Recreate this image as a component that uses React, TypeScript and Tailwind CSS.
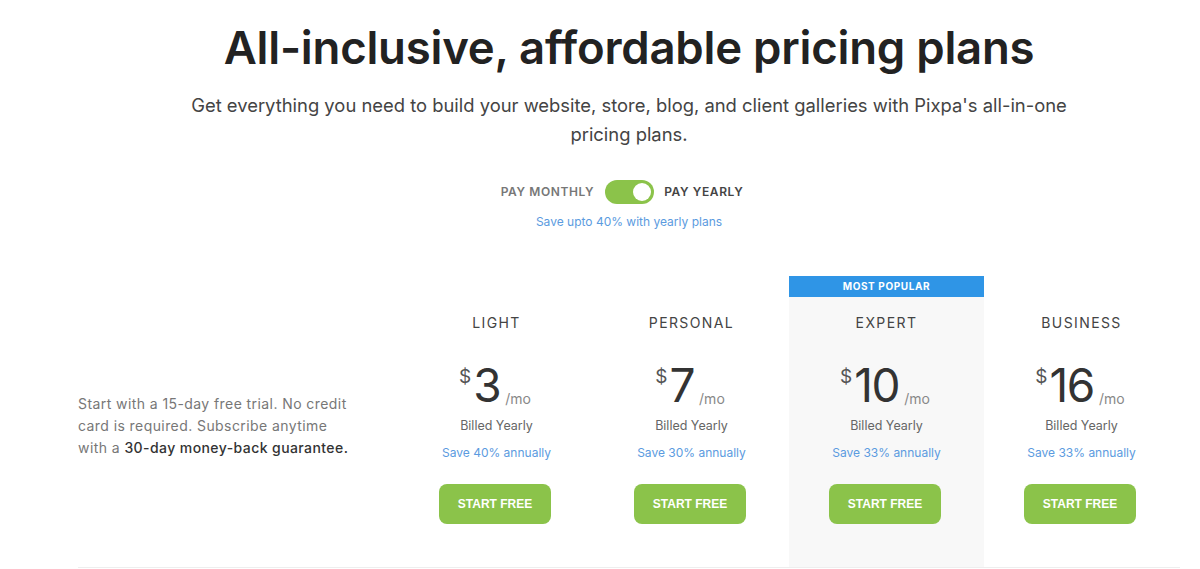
import React from 'react';

const plans = [
  { name: 'LIGHT', price: '3', save: 'Save 40% annually', popular: false },
  { name: 'PERSONAL', price: '7', save: 'Save 30% annually', popular: false },
  { name: 'EXPERT', price: '10', save: 'Save 33% annually', popular: true },
  { name: 'BUSINESS', price: '16', save: 'Save 33% annually', popular: false },
];

function PlanColumn({ plan }: { plan: (typeof plans)[number] }) {
  return (
    <div className="w-[195px] flex flex-col">
      <div
        className={`h-[21px] flex items-center justify-center text-[10px] font-bold tracking-[0.06em] text-white ${
          plan.popular ? 'bg-[#2f95e6]' : ''
        }`}
      >
        {plan.popular ? 'MOST POPULAR' : ''}
      </div>
      <div className={`flex-1 flex flex-col items-center pt-[16px] pb-[43px] ${plan.popular ? 'bg-[#f8f8f8]' : ''}`}>
        <div className="text-[14px] tracking-[0.1em] text-[#444] leading-[20px]">{plan.name}</div>
        <div className="mt-[29px] flex items-end h-[46px] -ml-[3px]">
          <span className="self-start text-[19px] text-[#555] leading-none mt-[5px] mr-[2px]">$</span>
          <span className="text-[46px] text-[#333] leading-none tracking-[-0.03em]">{plan.price}</span>
          <span className="text-[14px] text-[#888] leading-none ml-[5px] mb-[2px]">/mo</span>
        </div>
        <div className="mt-[8px] text-[12.5px] text-[#666] leading-[20px]">Billed Yearly</div>
        <div className="mt-[7px] text-[12px] text-[#5b9be0] leading-[20px]">{plan.save}</div>
        <button className="mt-[21px] -ml-[3px] w-[112px] h-[40px] rounded-[8px] bg-[#8bc34a] text-white text-[12px] font-bold font-['Liberation_Sans',sans-serif]">
          START FREE
        </button>
      </div>
    </div>
  );
}

export default function App() {
  return (
    <div className="w-[1200px] h-[569px] bg-white overflow-hidden font-['Inter',sans-serif]">
      <div className="ml-[78px] w-[1102px] flex flex-col items-center">
        <h1 className="mt-[20px] text-[45.5px] font-semibold text-[#222] leading-[56px] tracking-[-0.005em]">
          All-inclusive, affordable pricing plans
        </h1>
        <p className="mt-[15px] w-[900px] text-center text-[18.4px] leading-[29px] text-[#444]">
          Get everything you need to build your website, store, blog, and client galleries with Pixpa's all-in-one pricing plans.
        </p>
        <div className="mt-[31px] flex items-center -ml-[14px]">
          <span className="text-[12px] font-semibold tracking-[0.05em] text-[#777]">PAY MONTHLY</span>
          <div className="ml-[11px] w-[49px] h-[24px] rounded-full bg-[#8bc34a] flex items-center justify-end pr-[3px]">
            <div className="w-[18px] h-[18px] rounded-full bg-white"></div>
          </div>
          <span className="ml-[10px] text-[12px] font-semibold tracking-[0.05em] text-[#444]">PAY YEARLY</span>
        </div>
        <div className="mt-[9px] text-[12px] text-[#5b9be0]">Save upto 40% with yearly plans</div>
      </div>

      <div className="ml-[78px] w-[1102px] mt-[45px] flex border-b border-[#eeeeee]">
        <div className="w-[321px] flex items-start pt-[117px]">
          <p className="text-[14px] leading-[22px] text-[#777] tracking-[0.03em]">
            Start with a 15-day free trial. No credit
            <br />
            card is required. Subscribe anytime
            <br />
            with a <span className="text-[#333] font-medium">30-day money-back guarantee.</span>
          </p>
        </div>
        {plans.map((p) => (
          <PlanColumn key={p.name} plan={p} />
        ))}
      </div>
    </div>
  );
}
